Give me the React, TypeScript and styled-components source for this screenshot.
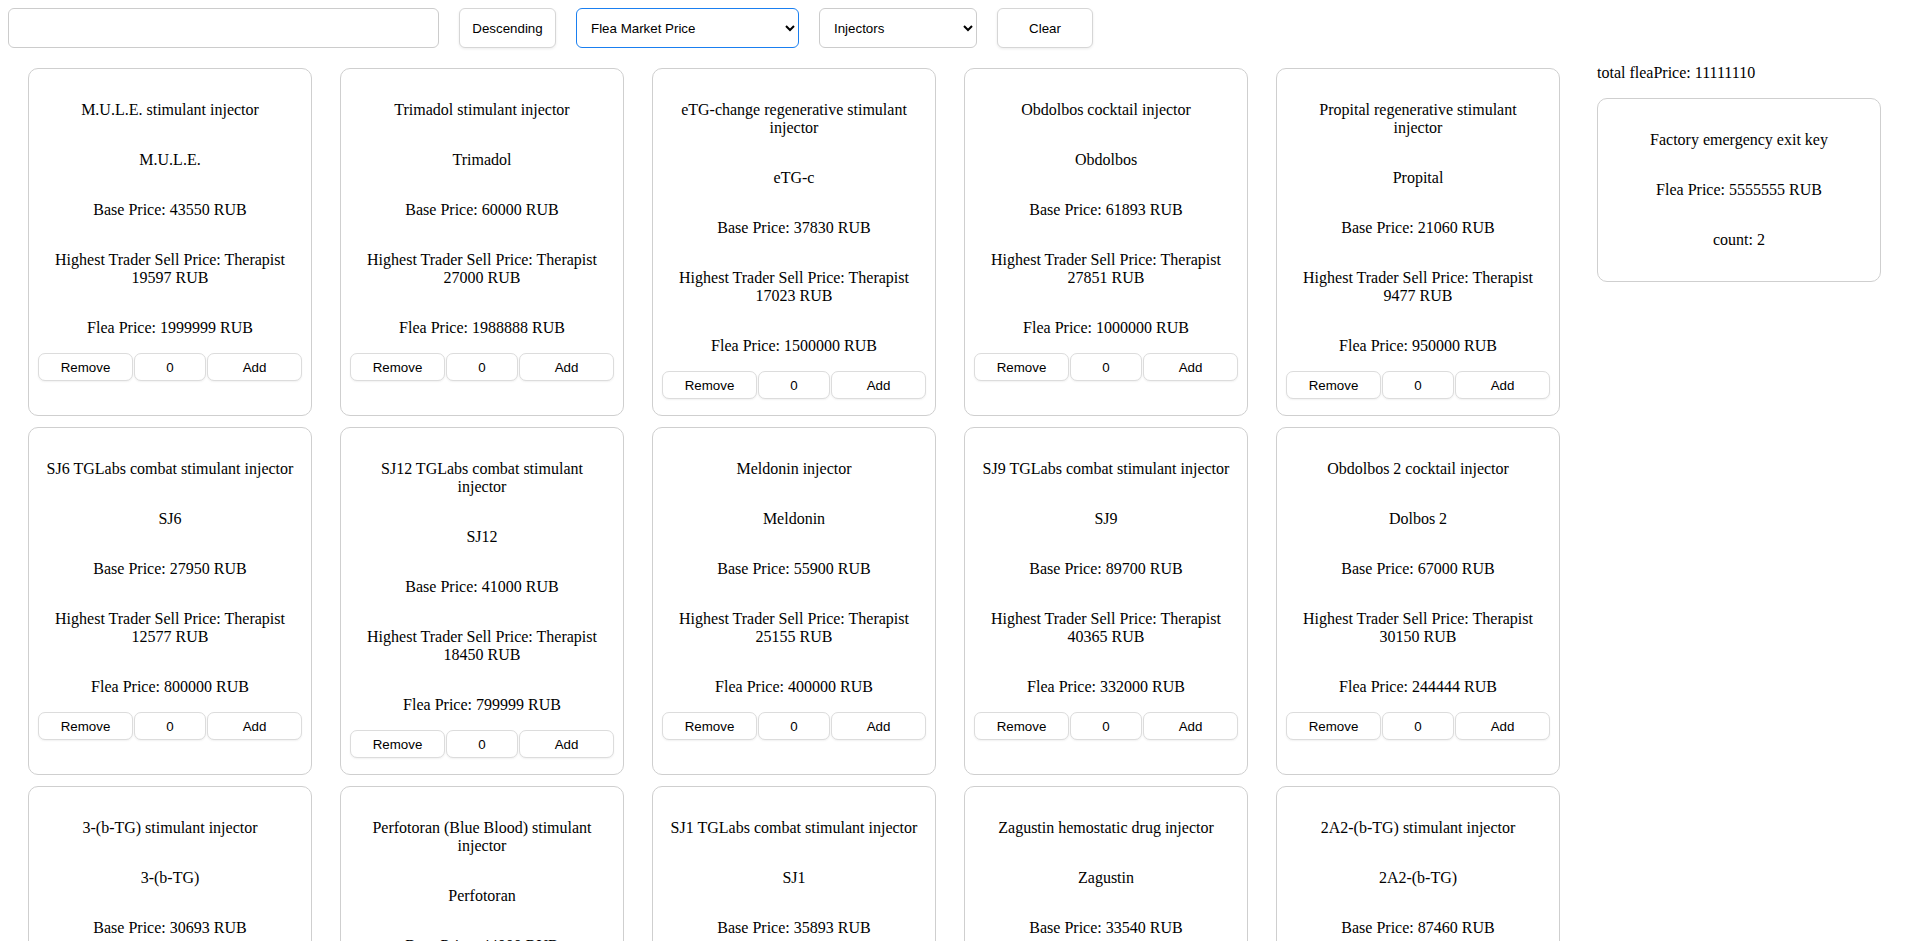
import React from 'react';
import styled, { createGlobalStyle } from 'styled-components';

const GlobalStyle = createGlobalStyle`
    body{
        margin: 8px;
        background: #fff;
        color: #000;
        font-family: "Liberation Serif", "Times New Roman", serif;
        font-size: 16px;
    }
`

const TopBar = styled.div`
    display: flex;
    align-items: center;
    gap: 20px;
    height: 40px;
`
const SearchInput = styled.input`
    box-sizing: border-box;
    width: 431px;
    height: 40px;
    border: 1px solid #ccc;
    border-radius: 6px;
    padding: 0 10px;
    font-family: "Liberation Sans", Arial, sans-serif;
    font-size: 13.33px;
    outline: none;
`
const BarButton = styled.button<{ $w: number }>`
    box-sizing: border-box;
    width: ${p => p.$w}px;
    height: 40px;
    border: 1px solid #d6d6d6;
    border-radius: 6px;
    background: #fff;
    box-shadow: 0 1px 3px rgba(0,0,0,0.08);
    font-family: "Liberation Sans", Arial, sans-serif;
    font-size: 13.33px;
    color: #000;
    cursor: pointer;
`
const Select = styled.select<{ $w: number, $active?: boolean }>`
    box-sizing: border-box;
    width: ${p => p.$w}px;
    height: 40px;
    border: 1px solid ${p => p.$active ? '#1a7ff0' : '#ccc'};
    border-radius: 6px;
    background: #fff;
    padding: 0 10px;
    font-family: "Liberation Sans", Arial, sans-serif;
    font-size: 13.33px;
    color: #000;
    outline: none;
`

const Main = styled.div`
    display: flex;
    align-items: flex-start;
`
const Grid = styled.div`
    display: grid;
    grid-template-columns: repeat(5, 284px);
    column-gap: 28px;
    row-gap: 11px;
    padding: 20px 0 0 20px;
`
const Card = styled.div`
    box-sizing: border-box;
    width: 284px;
    display: flex;
    flex-direction: column;
    align-items: center;
    padding: 0 16px 16px;
    border: 1px solid #cfcfcf;
    border-radius: 10px;
    background: #fff;
    p{
        margin: 16px 0;
        line-height: 18px;
        text-align: center;
    }
    p:first-child{
        margin-top: 32px;
    }
`
const BtnRow = styled.div`
    display: flex;
    justify-content: center;
    gap: 1px;
    width: 100%;
`
const SmallBtn = styled.button<{ $w: number }>`
    flex: none;
    box-sizing: border-box;
    width: ${p => p.$w}px;
    height: 28px;
    border: 1px solid #dcdcdc;
    border-radius: 7px;
    background: #fff;
    box-shadow: 0 1px 2px rgba(0,0,0,0.06);
    font-family: "Liberation Sans", Arial, sans-serif;
    font-size: 13.33px;
    color: #000;
    padding: 0;
`

const Side = styled.div`
    margin-left: 37px;
    width: 284px;
    > p{
        margin: 16px 0;
        line-height: 18px;
    }
`

type Item = { name: string, short: string, base: number, trader: number, flea: number }

const items: Item[] = [
    { name: 'M.U.L.E. stimulant injector', short: 'M.U.L.E.', base: 43550, trader: 19597, flea: 1999999 },
    { name: 'Trimadol stimulant injector', short: 'Trimadol', base: 60000, trader: 27000, flea: 1988888 },
    { name: 'eTG-change regenerative stimulant injector', short: 'eTG-c', base: 37830, trader: 17023, flea: 1500000 },
    { name: 'Obdolbos cocktail injector', short: 'Obdolbos', base: 61893, trader: 27851, flea: 1000000 },
    { name: 'Propital regenerative stimulant injector', short: 'Propital', base: 21060, trader: 9477, flea: 950000 },
    { name: 'SJ6 TGLabs combat stimulant injector', short: 'SJ6', base: 27950, trader: 12577, flea: 800000 },
    { name: 'SJ12 TGLabs combat stimulant injector', short: 'SJ12', base: 41000, trader: 18450, flea: 799999 },
    { name: 'Meldonin injector', short: 'Meldonin', base: 55900, trader: 25155, flea: 400000 },
    { name: 'SJ9 TGLabs combat stimulant injector', short: 'SJ9', base: 89700, trader: 40365, flea: 332000 },
    { name: 'Obdolbos 2 cocktail injector', short: 'Dolbos 2', base: 67000, trader: 30150, flea: 244444 },
    { name: '3-(b-TG) stimulant injector', short: '3-(b-TG)', base: 30693, trader: 13812, flea: 200000 },
    { name: 'Perfotoran (Blue Blood) stimulant injector', short: 'Perfotoran', base: 44000, trader: 19800, flea: 150000 },
    { name: 'SJ1 TGLabs combat stimulant injector', short: 'SJ1', base: 35893, trader: 16151, flea: 120000 },
    { name: 'Zagustin hemostatic drug injector', short: 'Zagustin', base: 33540, trader: 15093, flea: 90000 },
    { name: '2A2-(b-TG) stimulant injector', short: '2A2-(b-TG)', base: 87460, trader: 39357, flea: 80000 },
]

function ItemCard({ item }: { item: Item }) {
    return (
        <Card>
            <p>{item.name}</p>
            <p>{item.short}</p>
            <p>Base Price: {item.base} RUB</p>
            <p>Highest Trader Sell Price: Therapist {item.trader} RUB</p>
            <p>Flea Price: {item.flea} RUB</p>
            <BtnRow>
                <SmallBtn $w={95}>Remove</SmallBtn>
                <SmallBtn $w={72}>0</SmallBtn>
                <SmallBtn $w={95}>Add</SmallBtn>
            </BtnRow>
        </Card>
    )
}

export default function App() {
    return (
        <>
            <GlobalStyle />
            <TopBar>
                <SearchInput type="text" />
                <BarButton $w={97}>Descending</BarButton>
                <Select $w={223} $active defaultValue="flea">
                    <option value="flea">Flea Market Price</option>
                    <option value="base">Base Price</option>
                </Select>
                <Select $w={158} defaultValue="inj">
                    <option value="inj">Injectors</option>
                    <option value="keys">Keys</option>
                </Select>
                <BarButton $w={96}>Clear</BarButton>
            </TopBar>
            <Main>
                <Grid>
                    {items.map(it => <ItemCard key={it.name} item={it} />)}
                </Grid>
                <Side>
                    <p>total fleaPrice: 11111110</p>
                    <Card>
                        <p>Factory emergency exit key</p>
                        <p>Flea Price: 5555555 RUB</p>
                        <p>count: 2</p>
                    </Card>
                </Side>
            </Main>
        </>
    )
}
